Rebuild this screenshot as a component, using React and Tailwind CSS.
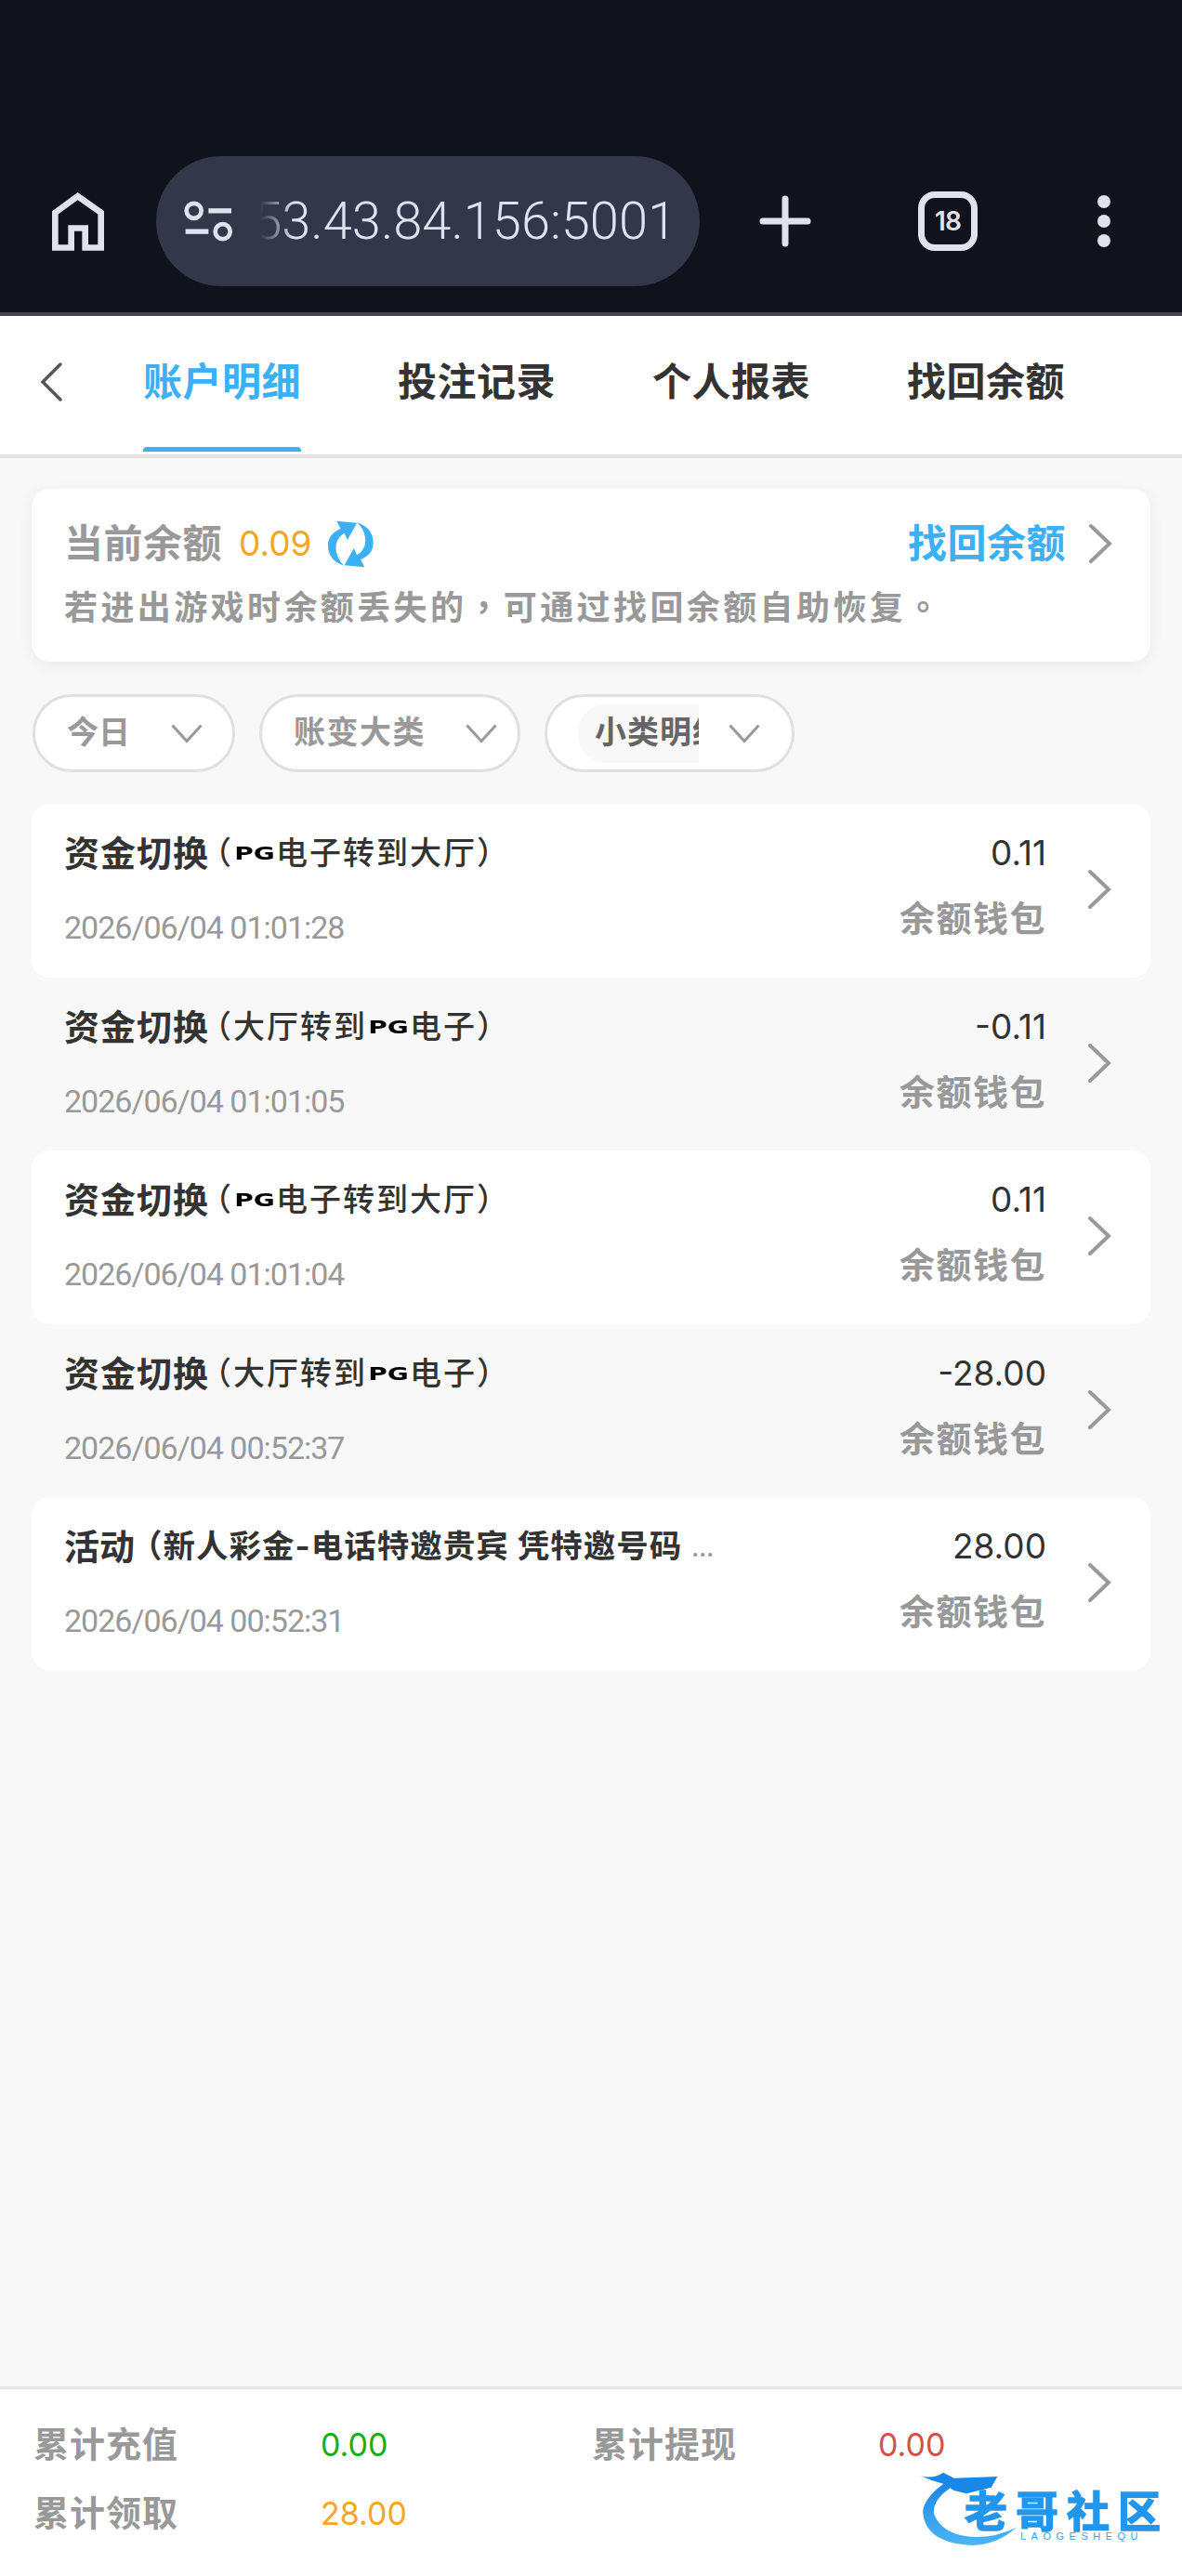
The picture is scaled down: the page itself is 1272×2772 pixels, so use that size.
import React from 'react';

const rows = [
    { detail: 'pgIn', amount: '0.11', date: '2026/06/04 01:01:28', card: true },
    { detail: 'pgOut', amount: '-0.11', date: '2026/06/04 01:01:05', card: false },
    { detail: 'pgIn', amount: '0.11', date: '2026/06/04 01:01:04', card: true },
    { detail: 'pgOut', amount: '-28.00', date: '2026/06/04 00:52:37', card: false },
    { detail: 'promo', amount: '28.00', date: '2026/06/04 00:52:31', card: true },
];

function Chevron({ className }) {
    return (
        <svg viewBox="0 0 26 44" className={className} fill="none" stroke="#999999" strokeWidth="4" strokeLinecap="round" strokeLinejoin="miter">
            <path d="M3 3 L23 22 L3 41" />
        </svg>
    );
}

function ChevronDown({ color = '#999999' }) {
    return (
        <svg viewBox="0 0 34 21" className="w-[34px] h-[21px] shrink-0" fill="none" stroke={color} strokeWidth="3">
            <path d="M1.5 1.5 L17 18.5 L32.5 1.5" />
        </svg>
    );
}

function PgLabel() {
    return <span className="inline-block w-[46px] tracking-normal text-center text-[20px] font-bold text-black font-['DejaVu_Sans',sans-serif] scale-x-[1.4]">PG</span>;
}

function Title({ detail }) {
    if (detail === 'promo') {
        return (
            <div className="flex items-center h-[44px] whitespace-nowrap text-[38px] leading-[44px] font-bold text-[#333333]">
                活动
                <span className="ml-[-5px] text-[34.5px] tracking-[1px]">（新人彩金-电话特邀贵宾 凭特邀号码</span>
                <span className="ml-[10px] mt-[6px] text-[24px] font-bold text-[#999999]">...</span>
            </div>
        );
    }
    return (
        <div className="flex items-center h-[44px] whitespace-nowrap text-[38px] leading-[44px] tracking-[1px] font-bold text-[#333333]">
            资金切换
            <span className="flex items-center text-[34px] tracking-[2px] font-medium">
                <span className="ml-[-10px]">（</span>
                {detail === 'pgIn' ? (
                    <>
                        <PgLabel />电子转到大厅
                    </>
                ) : (
                    <>
                        大厅转到<PgLabel />电子
                    </>
                )}
                <span>）</span>
            </span>
        </div>
    );
}

function Row({ detail, amount, date, card }) {
    return (
        <div className={`h-[186.5px] flex pl-[35px] pr-[42px] rounded-[20px] ${card ? 'bg-white' : ''}`}>
            <div className="flex-1 pt-[31px] min-w-0">
                <Title detail={detail} />
                <div className="mt-[38px] text-[34px] leading-[40px] tracking-[-1px] text-[#999999] font-['Roboto',sans-serif]">{date}</div>
            </div>
            <div className="pt-[31px] flex flex-col items-end mr-[44px]">
                <div className="text-[37px] leading-[44px] text-[#333333]">{amount}</div>
                <div className="mt-[26px] text-[38px] leading-[44px] font-bold tracking-[1.5px] text-[#999999]">余额钱包</div>
            </div>
            <Chevron className="w-[26px] h-[44px] mt-[70px]" />
        </div>
    );
}

function BrowserBar() {
    return (
        <div className="h-[340px] shrink-0 bg-[#10131c] border-b-4 border-[#44464f] pt-[168px] flex text-[#e0e2f0]">
            <svg viewBox="168 200 168 188" className="ml-[56px] mt-[39px] w-[56px] h-[63px] shrink-0" fill="none" stroke="#e0e2f0" strokeWidth="20">
                <path d="M178 378 V265 L251 212 L326 265 V378 H275 V315 H230 V378 Z" />
            </svg>
            <div className="ml-[56px] w-[585px] h-[140px] rounded-full bg-[#33374a] flex items-center shrink-0">
                <svg viewBox="590 225 165 140" className="ml-[29px] w-[55px] h-[47px] shrink-0" fill="none" stroke="#e0e2f0">
                    <circle cx="625" cy="260" r="24" strokeWidth="14" />
                    <path d="M672 260 H746" strokeWidth="16" />
                    <path d="M598 327 H672" strokeWidth="16" />
                    <circle cx="718" cy="327" r="24" strokeWidth="14" />
                </svg>
                <div className="ml-[28px] w-[448px] overflow-hidden flex justify-end whitespace-nowrap text-[56px] leading-[64px] font-light font-['Roboto',sans-serif] [mask-image:linear-gradient(to_right,transparent,black_36px)]">
                    53.43.84.156:5001
                </div>
            </div>
            <svg viewBox="0 0 56 56" className="ml-[64px] mt-[42px] w-[56px] h-[56px] shrink-0" stroke="#e0e2f0" strokeWidth="7" strokeLinecap="round">
                <path d="M28 4 V52 M4 28 H52" />
            </svg>
            <div className="ml-[115px] mt-[38px] w-[64px] h-[64px] rounded-[18px] border-[7px] border-[#e0e2f0] flex items-center justify-center text-[28px] font-semibold tracking-[-1px] shrink-0">18</div>
            <svg viewBox="0 0 14 56" className="ml-[129px] mt-[42px] w-[14px] h-[56px] shrink-0" fill="#e0e2f0">
                <circle cx="7" cy="7" r="7" />
                <circle cx="7" cy="28" r="7" />
                <circle cx="7" cy="49" r="7" />
            </svg>
        </div>
    );
}

function Tabs() {
    return (
        <div className="h-[153px] shrink-0 bg-white border-b-4 border-[#e3e3e3] flex items-center pb-[8px] relative">
            <svg viewBox="0 0 26 44" className="ml-[42px] w-[26px] h-[44px]" fill="none" stroke="#555555" strokeWidth="3.5" strokeLinecap="round">
                <path d="M23 3 L4 22 L23 41" />
            </svg>
            <div className="ml-[86px] flex gap-[104px] text-[42px] leading-[50px] font-bold text-[#333333] tracking-[0.5px]">
                <div className="relative text-[#3db0f5]">
                    账户明细
                    <div className="absolute left-0 right-0 top-[95px] h-[5px] rounded-t-sm bg-[#3db0f5]" />
                </div>
                <div>投注记录</div>
                <div>个人报表</div>
                <div>找回余额</div>
            </div>
        </div>
    );
}

function BalanceCard() {
    return (
        <div className="h-[186px] rounded-[20px] bg-white shadow-[0_4px_16px_rgba(0,0,0,0.06)] pl-[35px] pr-[41px] pt-[37px]">
            <div className="flex items-center h-[44px]">
                <div className="text-[42px] leading-[44px] font-bold text-[#999999] tracking-[0.5px]">当前余额</div>
                <div className="ml-[18px] text-[37px] leading-[44px] text-[#f5a623]">0.09</div>
                <svg viewBox="160 62 145 150" className="ml-[18px] w-[49px] h-[51px]" fill="#3db0f5">
                    <path d="M188 64 L252 70 L222 124 L212 102 Q180 122 186 160 Q192 190 212 206 Q160 190 160 140 Q160 105 200 88 Z" />
                    <path transform="rotate(180 232 137)" d="M188 64 L252 70 L222 124 L212 102 Q180 122 186 160 Q192 190 212 206 Q160 190 160 140 Q160 105 200 88 Z" />
                </svg>
                <div className="ml-auto text-[42px] leading-[44px] font-bold text-[#3db0f5] tracking-[0.5px]">找回余额</div>
                <Chevron className="ml-[24px] w-[26px] h-[44px]" />
            </div>
            <div className="mt-[22px] text-[36px] leading-[44px] font-bold text-[#999999] tracking-[3.4px] whitespace-nowrap">
                若进出游戏时余额丢失的<span className="font-['Noto_Sans_CJK_TC',sans-serif]">，</span>可通过找回余额自助恢复<span className="font-['Noto_Sans_CJK_TC',sans-serif]">。</span>
            </div>
        </div>
    );
}

function Filters() {
    return (
        <div className="mt-[35px] ml-[1px] flex gap-[26px] h-[84px]">
            <div className="w-[218px] rounded-full bg-white border-[3px] border-[#e0e0e0] flex items-center pl-[34px] pr-[32px] justify-between">
                <span className="text-[34px] mb-[4px] font-bold text-[#999999]">今日</span>
                <ChevronDown />
            </div>
            <div className="w-[281px] rounded-full bg-white border-[3px] border-[#e0e0e0] flex items-center pl-[34px] pr-[22px] justify-between">
                <span className="text-[34px] mb-[4px] font-bold text-[#999999] tracking-[1.5px]">账变大类</span>
                <ChevronDown />
            </div>
            <div className="w-[269px] rounded-full bg-white border-[3px] border-[#e0e0e0] flex items-center pl-[33px] pr-[34px] justify-between">
                <div className="w-[130px] h-[63px] overflow-hidden rounded-l-[30px] bg-[#f8f8f8] flex items-center pl-[18px] pb-[4px] whitespace-nowrap text-[34px] font-bold text-[#666666] tracking-[1px]">小类明细</div>
                <ChevronDown />
            </div>
        </div>
    );
}

function Footer() {
    return (
        <div className="h-[204px] shrink-0 bg-white border-t-[3px] border-[#e3e3e3] pt-[34px] pl-[36px] grid grid-cols-[309px_292px_308px_1fr] auto-rows-[50px] gap-y-[24px] items-center text-[#999999]">
            <div className="text-[38px] font-bold tracking-[1px]">累计充值</div>
            <div className="text-[34px] text-[#1aad19]">0.00</div>
            <div className="text-[38px] font-bold tracking-[1px]">累计提现</div>
            <div className="text-[34px] text-[#d0534a]">0.00</div>
            <div className="text-[38px] font-bold tracking-[1px]">累计领取</div>
            <div className="text-[34px] text-[#f5a623]">28.00</div>
        </div>
    );
}

function Watermark() {
    return (
        <div className="absolute left-[960px] top-[2640px] w-[312px] h-[132px]">
            <svg viewBox="0 0 936 396" className="w-full h-full blur-[0.6px]">
                <defs>
                    <linearGradient id="logo-fill" x1="0" y1="0" x2="0" y2="1">
                        <stop offset="0" stopColor="#1788e6" />
                        <stop offset="1" stopColor="#4db4f5" />
                    </linearGradient>
                </defs>
                <path fill="url(#logo-fill)" d="M170 95 Q95 150 100 195 Q110 290 260 297 Q340 295 400 240 Q340 270 270 270 Q160 265 135 195 Q130 150 190 110 Z" />
                <path fill="#1788e6" d="M90 72 Q130 85 165 62 L200 80 L340 75 L320 110 L280 120 L240 130 L200 120 L170 100 Q130 90 90 72 Z" />
            </svg>
            <div className="absolute left-[78px] top-[42px] text-[46px] leading-[40px] font-bold tracking-[9px] whitespace-nowrap text-[#2296ec] [-webkit-text-stroke:1.5px_#2296ec] blur-[0.4px]">老哥社区</div>
            <div className="absolute left-[138px] top-[83px] text-[11px] leading-[12px] tracking-[5.5px] whitespace-nowrap text-[#3a9fe8] font-['Liberation_Sans',sans-serif]">LAOGESHEQU</div>
        </div>
    );
}

export default function App() {
    return (
        <div className="relative h-[2772px] w-[1272px] flex flex-col overflow-hidden bg-[#f8f8f8] font-['Inter','Noto_Sans_CJK_SC',sans-serif]">
            <BrowserBar />
            <Tabs />
            <div className="flex-1 pt-[33px] px-[34px]">
                <BalanceCard />
                <Filters />
                <div className="mt-[34px]">
                    {rows.map((row, i) => (
                        <Row key={i} {...row} />
                    ))}
                </div>
            </div>
            <Footer />
            <Watermark />
        </div>
    );
}
